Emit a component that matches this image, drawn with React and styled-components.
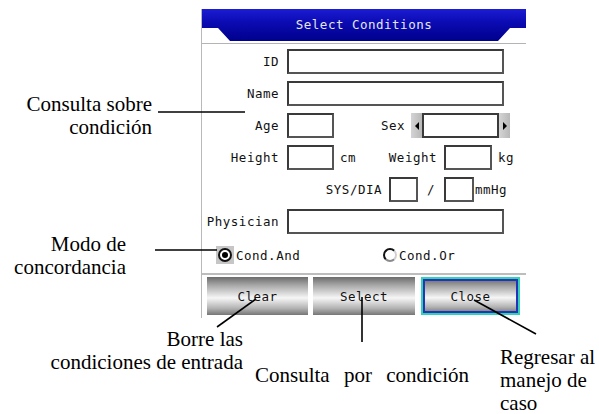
import styled, { createGlobalStyle } from "styled-components"

const GlobalStyle = createGlobalStyle`
  html, body { margin: 0; padding: 0; background: #fff; }
  body { width: 599px; height: 414px; overflow: hidden; }
`

// annotation callouts around the screen capture
const notes = [
    { lines: ["Consulta sobre", "condición"], top: 93, right: 447, align: "right" },
    { lines: ["Modo de", "concordancia"], top: 233, right: 473, align: "right" },
    { lines: ["Borre las", "condiciones de entrada"], top: 328, right: 356, align: "right" },
    { lines: ["Consulta por condición"], top: 364, left: 255, align: "left", spaced: true },
    { lines: ["Regresar al", "manejo de", "caso"], top: 346, left: 500, align: "left" },
]

const leaders = [
    [158, 112, 245, 112],
    [155, 250, 217, 250],
    [256, 299, 217, 327],
    [362, 297, 362, 342],
    [474, 300, 536, 334],
]

function Spinner() {
    return <SpinBox>
        <SpinArrow><Tri $dir="left" /></SpinArrow>
        <SpinField />
        <SpinArrow><Tri $dir="right" /></SpinArrow>
    </SpinBox>
}

export default function App() {
    return <Page>
        <GlobalStyle />
        <Dialog>
            <Header>Select Conditions</Header>
            <Divider />
            <Form>
                <Row>
                    <Label $w={77}>ID</Label>
                    <Field $w={217} />
                </Row>
                <Row>
                    <Label $w={77}>Name</Label>
                    <Field $w={217} />
                </Row>
                <Row>
                    <Label $w={77}>Age</Label>
                    <Field $w={47} />
                    <Label $w={71} $gap={6}>Sex</Label>
                    <Spinner />
                </Row>
                <Row>
                    <Label $w={77}>Height</Label>
                    <Field $w={47} />
                    <Unit $w={30}>cm</Unit>
                    <Label $w={73} $gap={7}>Weight</Label>
                    <Field $w={48} />
                    <Unit>kg</Unit>
                </Row>
                <Row>
                    <Label $w={180} $gap={7}>SYS/DIA</Label>
                    <Field $w={29} />
                    <Slash>/</Slash>
                    <Field $w={30} />
                    <Unit $pad={1}>mmHg</Unit>
                </Row>
                <Row>
                    <Label $w={77}>Physician</Label>
                    <Field $w={217} />
                </Row>
            </Form>
            <RadioRow>
                <Option $w={167}>
                    <Focus><Radio $on /></Focus>
                    <OptText>Cond.And</OptText>
                </Option>
                <Option>
                    <Radio />
                    <OptText>Cond.Or</OptText>
                </Option>
            </RadioRow>
            <Separator />
            <ButtonBar>
                <Button $w={101}>Clear</Button>
                <Button $w={102}>Select</Button>
                <Button $w={99} $active>Close</Button>
            </ButtonBar>
        </Dialog>

        {notes.map((n) => (
            <Callout key={n.lines[0]} $top={n.top} $left={n.left} $right={n.right} $align={n.align} $spaced={n.spaced}>
                {n.lines.map((l) => <div key={l}>{l}</div>)}
            </Callout>
        ))}

        <Leaders width="599" height="414" viewBox="0 0 599 414">
            {leaders.map(([x1, y1, x2, y2], i) => (
                <line key={i} x1={x1} y1={y1} x2={x2} y2={y2} stroke="#000" strokeWidth="1.6" />
            ))}
        </Leaders>
    </Page>
}

const Page = styled.div`
position: relative;
width: 599px;
height: 414px;
display: grid;
grid-template-columns: 201px 325px 1fr;
align-items: start;
padding-top: 9px;
box-sizing: border-box;
font-family: "DejaVu Sans Mono", "Liberation Mono", monospace;
font-size: 12.5px;
letter-spacing: 0.5px;
color: #111;
`

const Dialog = styled.div`
grid-column: 2;
border-left: 1px solid #b9b9b9;
height: 309px;
display: flex;
flex-direction: column;
`

const Header = styled.div`
height: 32px;
display: flex;
align-items: center;
justify-content: center;
padding-bottom: 1px;
box-sizing: border-box;
color: #e6e6ee;
background: linear-gradient(to bottom, #1c1cd4 0%, #0a0ab0 45%, #00008c 100%);
clip-path: polygon(0 0, 100% 0, 100% 19px, calc(100% - 16px) 19px, calc(100% - 28px) 100%, 28px 100%, 16px 19px, 0 19px);
`

const Divider = styled.div`
margin-top: 2px;
height: 1px;
background: #b4b4b4;
`

const Form = styled.div`
display: flex;
flex-direction: column;
gap: 7px;
padding-top: 5px;
`

const Row = styled.div`
display: flex;
align-items: center;
height: 25px;
`

const Label = styled.span`
width: ${(p) => p.$w}px;
margin-right: ${(p) => p.$gap ?? 8}px;
text-align: right;
flex: none;
`

const Field = styled.div`
width: ${(p) => p.$w}px;
height: 25px;
box-sizing: border-box;
flex: none;
background: #fff;
border: 2px solid #3a3a3a;
border-right-color: #555;
border-bottom-color: #555;
`

const Unit = styled.span`
width: ${(p) => (p.$w ? `${p.$w}px` : "auto")};
padding-left: ${(p) => p.$pad ?? 6}px;
box-sizing: border-box;
flex: none;
`

const Slash = styled.span`
width: 26px;
text-align: center;
flex: none;
`

const SpinBox = styled.div`
display: flex;
height: 25px;
flex: none;
`

const SpinArrow = styled.div`
width: 11px;
display: flex;
align-items: center;
justify-content: center;
background: linear-gradient(to right, #d4d4d4, #b8b8b8);
`

const Tri = styled.span`
width: 0;
height: 0;
border-top: 4px solid transparent;
border-bottom: 4px solid transparent;
${(p) => (p.$dir === "left" ? "border-right: 4px solid #000;" : "border-left: 4px solid #000;")}
`

const SpinField = styled.div`
width: 77px;
box-sizing: border-box;
border: 2px solid #3a3a3a;
background: #fff;
`

const RadioRow = styled.div`
display: flex;
align-items: center;
height: 18px;
margin-top: 12px;
padding-left: 14px;
`

const Option = styled.div`
display: flex;
align-items: center;
width: ${(p) => (p.$w ? `${p.$w}px` : "auto")};
flex: none;
`

const Focus = styled.div`
width: 18px;
height: 18px;
display: flex;
align-items: center;
justify-content: center;
background: #c6c6c6;
`

const Radio = styled.span`
width: 14px;
height: 14px;
box-sizing: border-box;
border-radius: 50%;
border: 2px solid #111;
background: #fff;
display: flex;
align-items: center;
justify-content: center;
${(p) => (p.$on ? "" : "border-right-color: #d0d0d0; border-bottom-color: #8a8a8a;")}
&::after {
  content: "";
  width: 6px;
  height: 6px;
  border-radius: 50%;
  background: ${(p) => (p.$on ? "#000" : "transparent")};
}
`

const OptText = styled.span`
margin-left: 2px;
`

const Separator = styled.div`
margin-top: 9px;
height: 2px;
background: #bdbdbd;
`

const ButtonBar = styled.div`
display: flex;
gap: 5px;
padding-left: 5px;
margin-top: 2px;
`

const Button = styled.div`
width: ${(p) => p.$w}px;
height: 38px;
box-sizing: border-box;
display: flex;
align-items: center;
justify-content: center;
flex: none;
background: linear-gradient(to bottom, #6c6c6c 0%, #a8a8a8 22%, #f6f6f6 55%, #b4b4b4 82%, #767676 100%);
${(p) => p.$active && `
  margin-left: 1px;
  border: 2px solid #34d2b4;
  box-shadow: inset 0 0 0 2px #2434b8;
`}
`

const Callout = styled.div`
position: absolute;
top: ${(p) => p.$top}px;
${(p) => (p.$left != null ? `left: ${p.$left}px;` : `right: ${p.$right}px;`)}
text-align: ${(p) => p.$align};
font-family: "Liberation Serif", "Times New Roman", Times, "DejaVu Serif", serif;
font-size: 21px;
line-height: 23px;
letter-spacing: 0;
color: #000;
white-space: nowrap;
word-spacing: ${(p) => (p.$spaced ? "9px" : "0")};
`

const Leaders = styled.svg`
position: absolute;
left: 0;
top: 0;
pointer-events: none;
`
